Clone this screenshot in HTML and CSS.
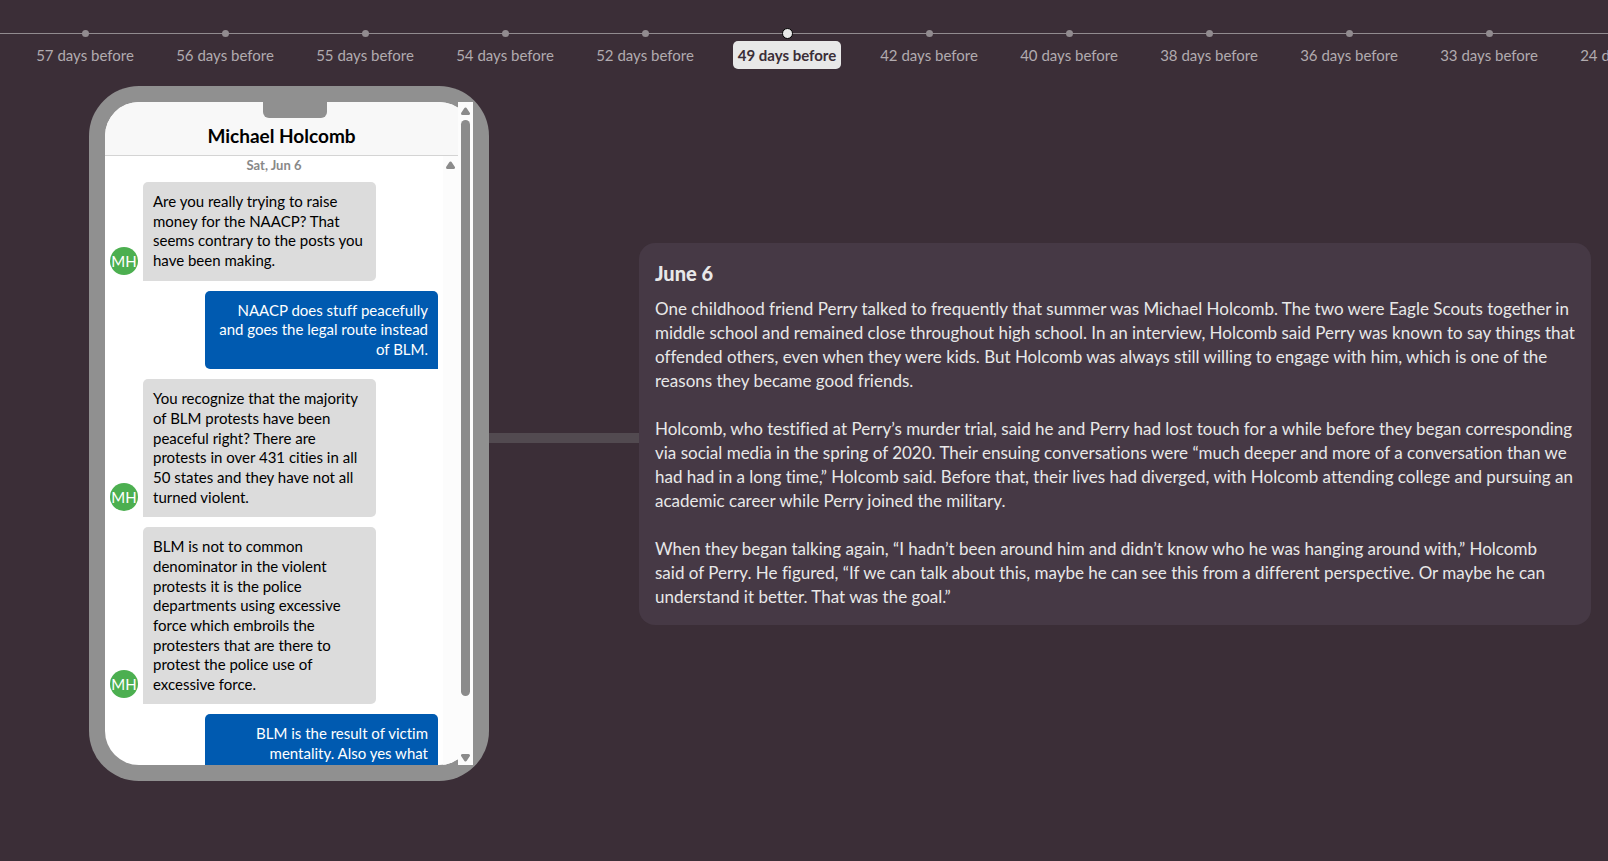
FILE: index.html
```html
<!DOCTYPE html>
<html lang="en">
<head>
    <meta charset="UTF-8">
    <meta name="viewport" content="width=device-width, initial-scale=1.0">
    <title>Timeline</title>
    <link rel="stylesheet" href="styles.css">
</head>
<body>
    <nav class="timeline">
        <button class="stop"><span class="dot"></span><span class="label">57 days before</span></button>
        <button class="stop"><span class="dot"></span><span class="label">56 days before</span></button>
        <button class="stop"><span class="dot"></span><span class="label">55 days before</span></button>
        <button class="stop"><span class="dot"></span><span class="label">54 days before</span></button>
        <button class="stop"><span class="dot"></span><span class="label">52 days before</span></button>
        <button class="stop active"><span class="dot"></span><span class="label">49 days before</span></button>
        <button class="stop"><span class="dot"></span><span class="label">42 days before</span></button>
        <button class="stop"><span class="dot"></span><span class="label">40 days before</span></button>
        <button class="stop"><span class="dot"></span><span class="label">38 days before</span></button>
        <button class="stop"><span class="dot"></span><span class="label">36 days before</span></button>
        <button class="stop"><span class="dot"></span><span class="label">33 days before</span></button>
        <button class="stop"><span class="dot"></span><span class="label">24 days before</span></button>
    </nav>

    <main class="slide">
        <section class="phone">
            <div class="notch"></div>
            <div class="screen">
                <header class="chat-header">
                    <h2>Michael Holcomb</h2>
                </header>
                <div class="chat">
                    <div class="messages">
                        <div class="date">Sat, Jun 6</div>
                        <div class="message">
                            <span class="avatar">MH</span>
                            <p class="bubble">Are you really trying to raise money for the NAACP? That seems contrary to the posts you have been making.</p>
                        </div>
                        <div class="message sent">
                            <p class="bubble">NAACP does stuff peacefully and goes the legal route instead of BLM.</p>
                        </div>
                        <div class="message">
                            <span class="avatar">MH</span>
                            <p class="bubble">You recognize that the majority of BLM protests have been peaceful right? There are protests in over 431 cities in all 50 states and they have not all turned violent.</p>
                        </div>
                        <div class="message">
                            <span class="avatar">MH</span>
                            <p class="bubble">BLM is not to common denominator in the violent protests it is the police departments using excessive force which embroils the protesters that are there to protest the police use of excessive force.</p>
                        </div>
                        <div class="message sent">
                            <p class="bubble">BLM is the result of victim mentality. Also yes what</p>
                        </div>
                    </div>
                    <div class="chat-track">
                        <svg width="9" height="8" viewBox="0 0 9 8"><path d="M4.5 2L7.5 6.5h-6z"/></svg>
                    </div>
                </div>
            </div>
            <div class="scrollbar">
                <svg width="9" height="8" viewBox="0 0 9 8"><path d="M4.5 2L7.5 6.5h-6z"/></svg>
                <div class="thumb"></div>
                <svg width="9" height="8" viewBox="0 0 9 8"><path d="M4.5 6L1.5 1.5h6z"/></svg>
            </div>
        </section>
        <div class="connector"></div>
        <article class="card">
            <h3>June 6</h3>
            <p>One childhood friend Perry talked to frequently that summer was Michael Holcomb. The two were Eagle Scouts together in middle school and remained close throughout high school. In an interview, Holcomb said Perry was known to say things that offended others, even when they were kids. But Holcomb was always still willing to engage with him, which is one of the reasons they became good friends.</p>
            <p>Holcomb, who testified at Perry’s murder trial, said he and Perry had lost touch for a while before they began corresponding via social media in the spring of 2020. Their ensuing conversations were “much deeper and more of a conversation than we had had in a long time,” Holcomb said. Before that, their lives had diverged, with Holcomb attending college and pursuing an academic career while Perry joined the military.</p>
            <p>When they began talking again, “I hadn’t been around him and didn’t know who he was hanging around with,” Holcomb<br>said of Perry. He figured, “If we can talk about this, maybe he can see this from a different perspective. Or maybe he can understand it better. That was the goal.”</p>
        </article>
    </main>
</body>
</html>
```
FILE: styles.css
```css
* {
    box-sizing: border-box;
}
body {
    margin: 0;
    height: 100vh;
    overflow: hidden;
    background-color: #3b2e37;
    color: #e8e8e8;
    font-family: Lato, "Open Sans", sans-serif;
    font-variant-ligatures: no-common-ligatures;
}
h2, h3, p {
    margin: 0;
}

/* timeline */
.timeline {
    position: relative;
    display: flex;
    height: 86px;
    padding: 28px 0 0 15px;
    overflow: hidden;
}
.timeline::before {
    content: "";
    position: absolute;
    top: 33px;
    left: 0;
    right: 0;
    height: 1px;
    background-color: #918b8f;
}
.stop {
    position: relative;
    display: flex;
    flex: 0 0 140px;
    flex-direction: column;
    align-items: center;
    padding: 0;
    border: none;
    background: none;
    color: #b1abaf;
    font-family: inherit;
    font-size: 15px;
    cursor: pointer;
}
.dot {
    width: 7px;
    height: 7px;
    margin: 2px 0 4px;
    border-radius: 50%;
    background-color: #918b8f;
}
.label {
    padding: 0 5px;
    border-radius: 5px;
    line-height: 28px;
    white-space: nowrap;
}
.stop.active {
    flex-basis: 144px;
}
.active .dot {
    width: 11px;
    height: 11px;
    margin: 0 0 2px;
    border: 1px solid #000;
    background-color: #e8e8e8;
}
.active .label {
    background-color: #e8e8e8;
    color: #3b2e37;
    font-weight: bold;
}

/* slide */
.slide {
    display: flex;
    align-items: center;
    padding: 0 17px 0 89px;
}
.connector {
    flex: 0 0 150px;
    height: 10px;
    margin-top: 8px;
    background-color: #524a50;
}

/* phone */
.phone {
    position: relative;
    flex: 0 0 400px;
    height: calc(100vh - 166px);
    padding: 16px;
    border-radius: 50px;
    background-color: #909090;
}
.notch {
    position: absolute;
    top: 16px;
    left: 174px;
    width: 64px;
    height: 16px;
    border-radius: 0 0 6px 6px;
    background-color: #909090;
    z-index: 1;
}
.screen {
    display: flex;
    flex-direction: column;
    height: 100%;
    padding-right: 15px;
    border-radius: 34px;
    background-color: #fff;
    overflow: hidden;
}
.chat-header {
    flex: none;
    padding: 22px 0 7px;
    border-bottom: 1px solid #d4d4d4;
    background-color: #f8f8f8;
    color: #000;
    text-align: center;
}
.chat-header h2 {
    font-size: 19px;
    line-height: 24px;
}
.chat {
    display: flex;
    flex: 1;
    min-height: 0;
}
.messages {
    flex: 1;
    padding: 0 5px;
}
.date {
    margin-bottom: 8px;
    color: #888;
    font-size: 13px;
    font-weight: bold;
    line-height: 18px;
    text-align: center;
}
.message {
    display: flex;
    align-items: flex-end;
    gap: 5px;
    margin-bottom: 10px;
}
.avatar {
    width: 28px;
    height: 28px;
    margin-bottom: 6px;
    border-radius: 50%;
    background-color: #4caf50;
    color: #fff;
    font-size: 15px;
    line-height: 28px;
    text-align: center;
}
.bubble {
    width: 233px;
    padding: 10px;
    border-radius: 5px 5px 5px 0;
    background-color: #dcdcdc;
    color: #000;
    font-size: 15px;
    line-height: 1.31;
}
.sent {
    justify-content: flex-end;
}
.sent .bubble {
    border-radius: 5px 5px 0 5px;
    background-color: #005ab0;
    color: #fff;
    text-align: right;
}

/* scrollbars */
.chat-track {
    flex: 0 0 15px;
    padding: 5px 3px;
    background-color: #fcfcfc;
}
.scrollbar {
    position: absolute;
    top: 16px;
    right: 16px;
    bottom: 16px;
    display: flex;
    flex-direction: column;
    align-items: center;
    width: 15px;
    padding: 5px 0 3px;
    background-color: #fcfcfc;
}
.chat-track svg,
.scrollbar svg {
    display: block;
    flex: none;
    fill: #8b8b8b;
    stroke: #8b8b8b;
    stroke-width: 3;
    stroke-linejoin: round;
}
.thumb {
    width: 9px;
    height: 88%;
    margin: 5px 0 auto;
    border-radius: 5px;
    background-color: #8b8b8b;
}

/* text card */
.card {
    flex: 1;
    padding: 16px;
    border-radius: 16px;
    background-color: #463945;
}
.card h3 {
    margin-bottom: 10px;
    font-size: 20px;
    font-weight: 900;
    line-height: 28px;
}
.card p {
    font-size: 17px;
    line-height: 24px;
}
.card p + p {
    margin-top: 24px;
}
```
